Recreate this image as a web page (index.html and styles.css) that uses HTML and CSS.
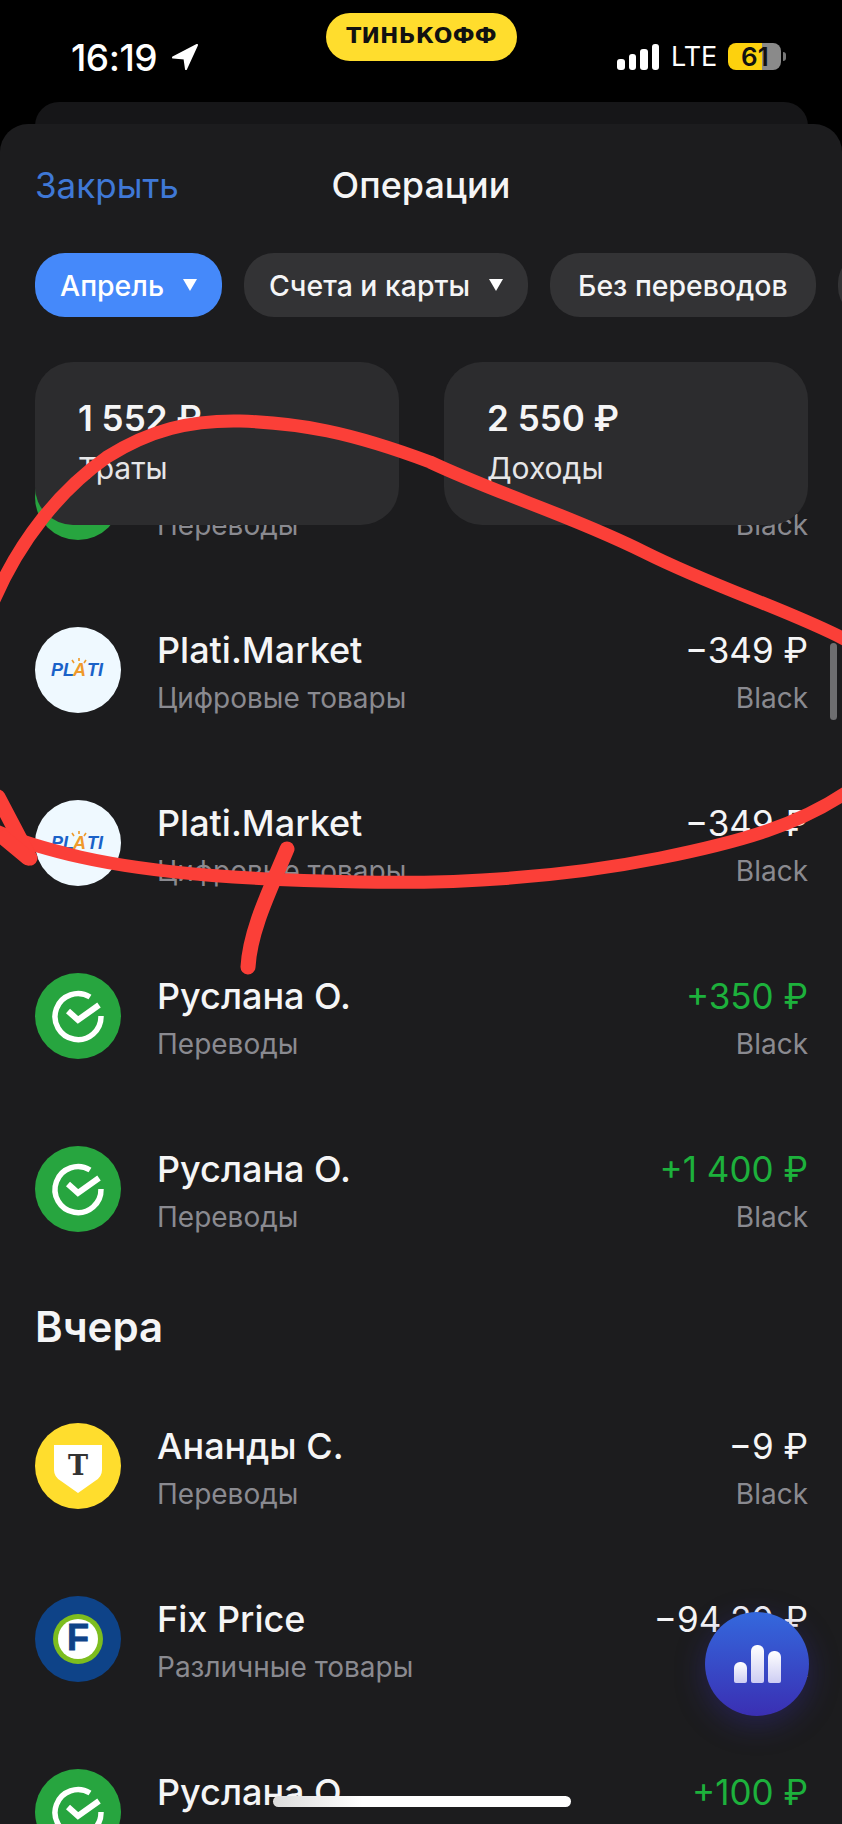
FILE: index.html
```html
<!DOCTYPE html>
<html>

<head>
    <meta charset="utf-8">
    <title>Операции</title>
    <link rel="stylesheet" href="styles.css">
</head>

<body>
    <svg class="icon-defs" width="0" height="0">
        <symbol id="sber" viewBox="0 0 86 86">
            <circle cx="43" cy="43" r="43" fill="#27a53f" />
            <path d="M55 24A23 23 0 1 0 66 43" fill="none" stroke="#fff" stroke-width="5.5" />
            <path d="M33 38L43 47L64 32" fill="none" stroke="#fff" stroke-width="6" />
        </symbol>
    </svg>

    <div class="status-bar">
        <div class="status-time">
            16:19
            <svg width="28" height="28" viewBox="0 0 28 28">
                <path d="M26 2L2 14.5L13.5 15.5L15 26Z" fill="#fff" stroke="#fff" stroke-width="2" stroke-linejoin="round" />
            </svg>
        </div>
        <div class="brand-pill">ТИНЬКОФФ</div>
        <div class="status-right">
            <div class="signal">
                <span class="signal-1"></span>
                <span class="signal-2"></span>
                <span class="signal-3"></span>
                <span class="signal-4"></span>
            </div>
            <span class="lte">LTE</span>
            <div class="battery">61</div>
            <span class="battery-nub"></span>
        </div>
    </div>

    <div class="back-card"></div>

    <div class="sheet">
        <div class="sheet-header">
            <a class="close-link">Закрыть</a>
            <h1>Операции</h1>
        </div>

        <div class="chips">
            <div class="chip chip-active">Апрель <span class="chip-arrow"></span></div>
            <div class="chip">Счета и карты <span class="chip-arrow"></span></div>
            <div class="chip chip-plain">Без переводов</div>
            <div class="chip chip-cut"></div>
        </div>

        <div class="totals">
            <div class="total-card">
                <div class="total-sum">1 552 ₽</div>
                <div class="total-label">Траты</div>
            </div>
            <div class="total-card">
                <div class="total-sum">2 550 ₽</div>
                <div class="total-label">Доходы</div>
            </div>
        </div>

        <div class="operations">
            <!-- first row is scrolled under the totals, only its second line shows -->
            <div class="row">
                <svg class="avatar"><use href="#sber" /></svg>
                <div class="row-text">
                    <div class="row-name"></div>
                    <div class="row-sub">Переводы</div>
                </div>
                <div class="row-right">
                    <div class="row-sum"></div>
                    <div class="row-sub">Black</div>
                </div>
            </div>
            <div class="row">
                <svg class="avatar" viewBox="0 0 86 86">
                    <circle cx="43" cy="43" r="43" fill="#eff9ff" />
                    <text x="16" y="49" class="plati-text" fill="#1a62c8">PL</text>
                    <text x="38" y="49" class="plati-text" fill="#ef9a2b">A</text>
                    <text x="52" y="49" class="plati-text" fill="#1a62c8">TI</text>
                    <path d="M44 31V34M37 33L39 36M51 33L49 36" stroke="#ef9a2b" stroke-width="1.6" />
                </svg>
                <div class="row-text">
                    <div class="row-name">Plati.Market</div>
                    <div class="row-sub">Цифровые товары</div>
                </div>
                <div class="row-right">
                    <div class="row-sum">−349 ₽</div>
                    <div class="row-sub">Black</div>
                </div>
            </div>
            <div class="row">
                <svg class="avatar" viewBox="0 0 86 86">
                    <circle cx="43" cy="43" r="43" fill="#eff9ff" />
                    <text x="16" y="49" class="plati-text" fill="#1a62c8">PL</text>
                    <text x="38" y="49" class="plati-text" fill="#ef9a2b">A</text>
                    <text x="52" y="49" class="plati-text" fill="#1a62c8">TI</text>
                    <path d="M44 31V34M37 33L39 36M51 33L49 36" stroke="#ef9a2b" stroke-width="1.6" />
                </svg>
                <div class="row-text">
                    <div class="row-name">Plati.Market</div>
                    <div class="row-sub">Цифровые товары</div>
                </div>
                <div class="row-right">
                    <div class="row-sum">−349 ₽</div>
                    <div class="row-sub">Black</div>
                </div>
            </div>
            <div class="row">
                <svg class="avatar"><use href="#sber" /></svg>
                <div class="row-text">
                    <div class="row-name">Руслана О.</div>
                    <div class="row-sub">Переводы</div>
                </div>
                <div class="row-right">
                    <div class="row-sum income">+350 ₽</div>
                    <div class="row-sub">Black</div>
                </div>
            </div>
            <div class="row">
                <svg class="avatar"><use href="#sber" /></svg>
                <div class="row-text">
                    <div class="row-name">Руслана О.</div>
                    <div class="row-sub">Переводы</div>
                </div>
                <div class="row-right">
                    <div class="row-sum income">+1 400 ₽</div>
                    <div class="row-sub">Black</div>
                </div>
            </div>

            <h2 class="day-title">Вчера</h2>

            <div class="row">
                <svg class="avatar" viewBox="0 0 86 86">
                    <circle cx="43" cy="43" r="43" fill="#ffdd2d" />
                    <path d="M19 22H67V47Q67 54 60 58L43 70L26 58Q19 54 19 47Z" fill="#fff" />
                    <text x="43" y="52" class="tinkoff-t">Т</text>
                </svg>
                <div class="row-text">
                    <div class="row-name">Ананды С.</div>
                    <div class="row-sub">Переводы</div>
                </div>
                <div class="row-right">
                    <div class="row-sum">−9 ₽</div>
                    <div class="row-sub">Black</div>
                </div>
            </div>
            <div class="row">
                <svg class="avatar" viewBox="0 0 86 86">
                    <circle cx="43" cy="43" r="43" fill="#0e4388" />
                    <circle cx="43" cy="43" r="25" fill="#7dbd1e" />
                    <circle cx="43" cy="43" r="20" fill="#fff" />
                    <text x="43" y="54" class="fix-f">F</text>
                </svg>
                <div class="row-text">
                    <div class="row-name">Fix Price</div>
                    <div class="row-sub">Различные товары</div>
                </div>
                <div class="row-right">
                    <div class="row-sum">−94,20 ₽</div>
                    <div class="row-sub">Black</div>
                </div>
            </div>
            <div class="row">
                <svg class="avatar"><use href="#sber" /></svg>
                <div class="row-text">
                    <div class="row-name">Руслана О.</div>
                </div>
                <div class="row-right">
                    <div class="row-sum income">+100 ₽</div>
                </div>
            </div>
        </div>
    </div>

    <div class="scroll-thumb"></div>

    <!-- hand drawn marker on top of the screenshot -->
    <svg class="scribble" width="842" height="1824" viewBox="0 0 842 1824">
        <path d="M-6 600C20 540 60 490 107 457C150 430 190 420 240 421C300 423 350 432 430 462C500 495 570 515 644 552C720 590 790 610 850 642" />
        <path d="M850 790C800 825 740 842 660 858C560 878 460 884 360 882C260 880 160 875 80 857C50 850 20 842 -6 830" />
        <path d="M-2 797L30 858" class="scribble-fat" />
        <path d="M4 838L28 858" class="scribble-fat" />
        <path d="M287 849C270 890 250 930 248 967" class="scribble-fat" />
    </svg>

    <div class="fab">
        <span class="fab-bar fab-bar-1"></span>
        <span class="fab-bar fab-bar-2"></span>
        <span class="fab-bar fab-bar-3"></span>
    </div>

    <div class="home-indicator"></div>
</body>

</html>
```

FILE: styles.css
```css
html,
body {
    margin: 0;
    padding: 0;
}

body {
    position: relative;
    width: 842px;
    height: 1824px;
    overflow: hidden;
    background-color: #000;
    color: #f5f5f6;
    font-family: Inter, "Noto Sans", sans-serif;
}

.icon-defs {
    position: absolute;
}

/* status bar */
.status-bar {
    display: grid;
    grid-template-columns: 255px 191px 1fr;
    height: 102px;
    padding-left: 71px;
    box-sizing: border-box;
}

.status-time {
    display: flex;
    gap: 14px;
    align-items: center;
    height: 30px;
    margin-top: 42px;
    font-size: 37px;
    font-weight: 500;
    letter-spacing: -0.5px;
    color: #fff;
}

.brand-pill {
    height: 48px;
    margin-top: 13px;
    background-color: #ffdd2d;
    border-radius: 24px;
    color: #111;
    font-family: "DejaVu Sans", sans-serif;
    font-size: 22px;
    font-weight: 700;
    letter-spacing: 0.2px;
    line-height: 46px;
    text-align: center;
}

.status-right {
    display: flex;
    align-items: center;
    height: 27px;
    margin-top: 43px;
    margin-left: 100px;
}

.signal {
    display: flex;
    gap: 4px;
    align-items: flex-end;
    height: 26px;
}

.signal span {
    width: 7.5px;
    background-color: #fff;
    border-radius: 3px;
}

.signal-1 {
    height: 11px;
}

.signal-2 {
    height: 16px;
}

.signal-3 {
    height: 21px;
}

.signal-4 {
    height: 26px;
}

.lte {
    margin-left: 12px;
    font-size: 27px;
    color: #fff;
}

.battery {
    width: 53px;
    height: 27px;
    margin-left: 11px;
    background: linear-gradient(to right, #fdd10d 64%, #8a8a8a 64%);
    border-radius: 8px;
    color: #111;
    font-size: 26px;
    font-weight: 600;
    line-height: 27px;
    text-align: center;
}

.battery-nub {
    width: 3px;
    height: 9px;
    margin-left: 2px;
    background-color: #777;
    border-radius: 0 3px 3px 0;
}

.back-card {
    height: 42px;
    margin: 0 34px -20px 35px;
    background-color: #161618;
    border-radius: 24px 24px 0 0;
}

/* sheet */
.sheet {
    position: relative;
    height: 1700px;
    padding-top: 36px;
    box-sizing: border-box;
    background-color: #1c1c1e;
    border-radius: 28px 28px 0 0;
}

.sheet-header {
    display: grid;
    grid-template-columns: 1fr auto 1fr;
    align-items: center;
    height: 50px;
    padding: 0 35px;
}

.close-link {
    color: #3f78d6;
    font-size: 35px;
}

.sheet-header h1 {
    margin: 0;
    font-size: 36px;
    font-weight: 500;
}

.chips {
    display: flex;
    gap: 22px;
    margin-top: 43px;
    padding-left: 35px;
    overflow: hidden;
}

.chip {
    display: flex;
    flex-shrink: 0;
    gap: 19px;
    align-items: center;
    height: 64px;
    padding: 0 25px;
    background-color: #333335;
    border-radius: 30px;
    font-size: 28.4px;
    font-weight: 500;
    white-space: nowrap;
}

.chip-active {
    background-color: #4589fa;
    color: #fff;
}

.chip-plain {
    padding: 0 28px;
}

.chip-cut {
    padding: 0 30px;
}

.chip-arrow {
    width: 0;
    height: 0;
    border-top: 12px solid #fff;
    border-left: 7px solid transparent;
    border-right: 7px solid transparent;
}

.totals {
    position: relative;
    z-index: 1;
    display: grid;
    grid-template-columns: 364px 364px;
    gap: 45px;
    margin-top: 45px;
    padding-left: 35px;
}

.total-card {
    height: 163px;
    padding: 36px 43px 0;
    box-sizing: border-box;
    background-color: #2c2c2e;
    border-radius: 38px;
}

.total-sum {
    font-size: 35px;
    font-weight: 600;
    line-height: 40px;
}

.total-label {
    margin-top: 10px;
    color: #e6e6e8;
    font-size: 30px;
    line-height: 40px;
}

/* list */
.operations {
    display: flex;
    flex-direction: column;
    gap: 87px;
    margin-top: -71px;
    padding: 0 34px 0 35px;
}

.row {
    display: flex;
    gap: 36px;
    flex-shrink: 0;
    height: 86px;
}

.avatar {
    width: 86px;
    height: 86px;
    flex-shrink: 0;
}

.row-text {
    flex: 1;
}

.row-right {
    text-align: right;
}

.row-name,
.row-sum {
    min-height: 46px;
    font-size: 36px;
    font-weight: 500;
    line-height: 46px;
    margin-bottom: 2px;
    white-space: nowrap;
}

.row-sum {
    font-size: 35px;
    font-weight: 400;
}

.row-sub {
    color: #8a8a90;
    font-size: 28px;
    line-height: 46px;
}

.income {
    color: #1db13c;
}

.day-title {
    height: 50px;
    margin: -17px 0 -16px;
    font-size: 42px;
    font-weight: 600;
    line-height: 50px;
}

/* logo letters */
.plati-text {
    font-family: "Liberation Sans", sans-serif;
    font-size: 18px;
    font-style: italic;
    font-weight: 700;
}

.tinkoff-t {
    fill: #333;
    font-family: "DejaVu Serif", serif;
    font-size: 27px;
    font-weight: 700;
    text-anchor: middle;
}

.fix-f {
    fill: #0e4388;
    stroke: #0e4388;
    stroke-width: 0.8;
    font-family: "Liberation Sans", sans-serif;
    font-size: 36px;
    font-weight: 700;
    text-anchor: middle;
}

/* overlays */
.scroll-thumb {
    position: absolute;
    top: 643px;
    left: 830px;
    width: 7px;
    height: 77px;
    background-color: #6e6e70;
    border-radius: 4px;
}

.scribble {
    position: absolute;
    top: 0;
    left: 0;
    z-index: 2;
}

.scribble path {
    fill: none;
    stroke: #fb3f38;
    stroke-width: 13;
    stroke-linecap: round;
}

.scribble .scribble-fat {
    stroke-width: 15;
}

.fab {
    position: absolute;
    top: 1612px;
    left: 705px;
    z-index: 3;
    display: flex;
    gap: 4px;
    align-items: flex-end;
    justify-content: center;
    width: 104px;
    height: 104px;
    padding-bottom: 33px;
    box-sizing: border-box;
    background: linear-gradient(to bottom, #3468dd, #3a2fb3);
    border-radius: 50%;
    box-shadow: 0 8px 30px rgba(58, 47, 179, 0.35);
}

.fab-bar {
    width: 13px;
    background: linear-gradient(to bottom, #fff, #cdcdf3);
    border-radius: 6px 6px 2px 2px;
}

.fab-bar-1 {
    height: 21px;
}

.fab-bar-2 {
    height: 38px;
}

.fab-bar-3 {
    height: 32px;
}

.home-indicator {
    position: absolute;
    top: 1796px;
    left: 273px;
    z-index: 3;
    width: 298px;
    height: 11px;
    background: linear-gradient(to right, #dcdcdc, #fff 30%);
    border-radius: 6px;
}
```
